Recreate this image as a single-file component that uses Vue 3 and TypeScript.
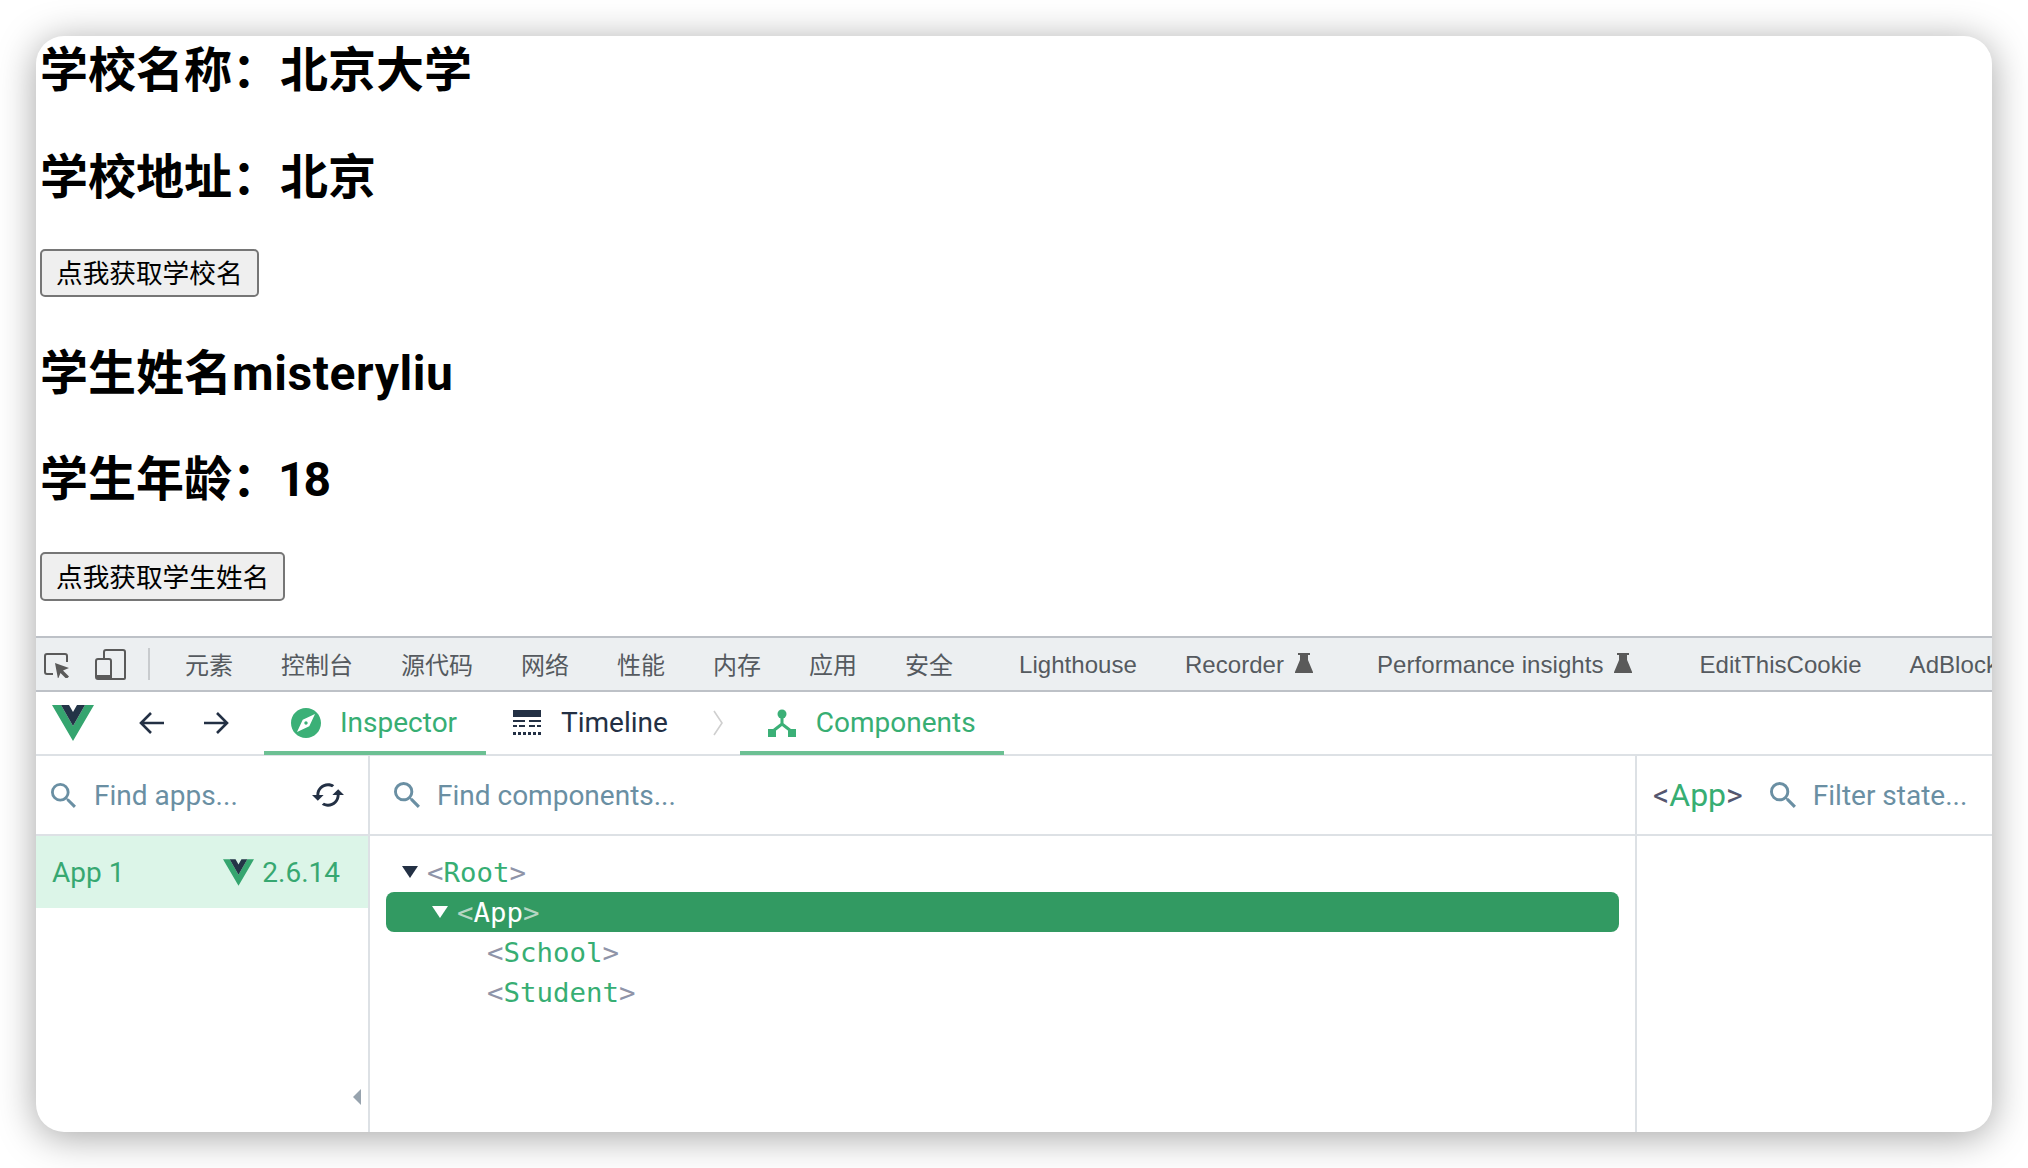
<script setup lang="ts">
const cnTabs: string[] = ['元素', '控制台', '源代码', '网络', '性能', '内存', '应用', '安全']
const searchPath = 'M15.5 14h-.79l-.28-.27A6.47 6.47 0 0 0 16 9.5 6.5 6.5 0 1 0 9.5 16c1.61 0 3.09-.59 4.23-1.57l.27.28v.79l5 4.99L20.49 19l-4.99-5zm-6 0C7.01 14 5 11.99 5 9.5S7.01 5 9.5 5 14 7.01 14 9.5 11.99 14 9.5 14z'
</script>

<template>
  <div class="window">
    <div class="page">
      <h2 class="first">学校名称：北京大学</h2>
      <h2>学校地址：北京</h2>
      <button class="btn">点我获取学校名</button>
      <h2 class="third">学生姓名<span class="wide">misteryliu</span></h2>
      <h2 class="fourth">学生年龄：<span class="narrow">18</span></h2>
      <button class="btn last">点我获取学生姓名</button>
    </div>

    <div class="devtools">
      <div class="chrome-bar">
        <svg class="ic-inspect" viewBox="0 0 28 28" width="28" height="28">
          <path d="M10 24H4a2 2 0 0 1-2-2V6a2 2 0 0 1 2-2h18a2 2 0 0 1 2 2v6" fill="none" stroke="#5a5a5a" stroke-width="2" />
          <path d="M12 13l14 5-6 2.5 6 6-2.5 2.500-6-6L15 29z" fill="#5a5a5a" />
        </svg>
        <svg class="ic-device" viewBox="0 0 32 32" width="32" height="32">
          <path d="M9 11V4a2 2 0 0 1 2-2h17a2 2 0 0 1 2 2v26a1 1 0 0 1-1 1H3a2 2 0 0 1-2-2V13a2 2 0 0 1 2-2h11a2 2 0 0 1 2 2v18" fill="none" stroke="#5a5a5a" stroke-width="2" />
          <rect x="2" y="27" width="14" height="4" fill="#5a5a5a" />
        </svg>
        <span class="vsep"></span>
        <span v-for="t in cnTabs" :key="t" class="ctab">{{ t }}</span>
        <span class="ctab lat first-lat">Lighthouse</span>
        <span class="ctab lat">Recorder<svg class="flask" viewBox="0 0 18 20" width="18" height="20"><path d="M3 0h12v2h-2v5l5 12v1H0v-1L5 7V2H3z" fill="#5a5a5a" /></svg></span>
        <span class="ctab lat">Performance insights<svg class="flask flask-wide" viewBox="0 0 18 20" width="18" height="20"><path d="M3 0h12v2h-2v5l5 12v1H0v-1L5 7V2H3z" fill="#5a5a5a" /></svg></span>
        <span class="ctab lat">EditThisCookie</span>
        <span class="ctab lat">AdBlock</span>
      </div>

      <div class="vue-bar">
        <svg class="logo" viewBox="0 0 42 36" width="42" height="36">
          <path d="M0 0h9l12 21L33 0h9L21 36z" fill="#35a56f" />
          <path d="M9 0h8l4 7 4-7h8L21 21z" fill="#233447" />
        </svg>
        <svg class="arrow" viewBox="0 0 26 24" width="26" height="24">
          <path d="M25 12H3M12 2L2 12l10 10" fill="none" stroke="#233044" stroke-width="2.600" />
        </svg>
        <svg class="arrow second" viewBox="0 0 26 24" width="26" height="24">
          <path d="M1 12h22M14 2l10 10-10 10" fill="none" stroke="#233044" stroke-width="2.600" />
        </svg>
        <div class="vtab active inspector">
          <svg viewBox="2 2 20 20" width="30" height="30">
            <path d="M12 10.900c-.61 0-1.100.49-1.100 1.100s.49 1.100 1.100 1.100c.61 0 1.100-.49 1.100-1.100s-.49-1.100-1.100-1.100zM12 2C6.480 2 2 6.480 2 12s4.480 10 10 10 10-4.480 10-10S17.520 2 12 2zm2.190 12.190L6 18l3.810-8.190L18 6l-3.810 8.190z" fill="#3bb077" />
          </svg>
          <span>Inspector</span>
        </div>
        <div class="vtab timeline">
          <svg viewBox="0 0 28 26" width="28" height="26">
            <path d="M0 0h28v7H0zM0 10h12v2H0zM16 10h12v2H16zM0 15h4v2H0zM6 15h6v2H6zM16 15h6v2h-6zM24 15h4v2h-4zM0 22h3v3H0zM5 22h3v3H5zM10 22h3v3h-3zM15 22h3v3h-3zM20 22h3v3h-3zM25 22h3v3h-3z" fill="#233044" />
          </svg>
          <span>Timeline</span>
        </div>
        <svg class="chev" viewBox="0 0 10 26" width="10" height="26">
          <path d="M1 1l8 12-8 12" fill="none" stroke="#cfcfcf" stroke-width="1.600" />
        </svg>
        <div class="vtab active components">
          <svg viewBox="0 0 28 28" width="28" height="28">
            <circle cx="14" cy="5" r="4.500" fill="#3bb077" />
            <path d="M14 8v8M14 15l-9 7M14 15l9 7" fill="none" stroke="#3bb077" stroke-width="3" />
            <rect x="0" y="20" width="8" height="8" fill="#3bb077" />
            <rect x="20" y="20" width="8" height="8" fill="#3bb077" />
          </svg>
          <span>Components</span>
        </div>
      </div>

      <div class="panes">
        <div class="pane-apps">
          <div class="search">
            <svg class="sicon" viewBox="3 3 17.500 17.500" width="25" height="25"><path :d="searchPath" fill="#6a8fa3" /></svg>
            <span class="ph">Find apps...</span>
            <svg class="reload" viewBox="1 4 22 16" width="32" height="24">
              <path d="M19 8l-4 4h3c0 3.310-2.690 6-6 6-1.010 0-1.970-.25-2.800-.7l-1.460 1.460C8.970 19.540 10.430 20 12 20c4.420 0 8-3.580 8-8h3l-4-4zM6 12c0-3.310 2.690-6 6-6 1.010 0 1.970.25 2.800.7l1.460-1.460C15.030 4.460 13.570 4 12 4c-4.420 0-8 3.580-8 8H1l4 4 4-4H6z" fill="#233044" />
            </svg>
          </div>
          <div class="app-row">
            <span>App 1</span>
            <span class="ver">
              <svg viewBox="0 0 42 36" width="31" height="27">
                <path d="M0 0h9l12 21L33 0h9L21 36z" fill="#35a56f" />
                <path d="M9 0h8l4 7 4-7h8L21 21z" fill="#233447" />
              </svg>
              2.6.14
            </span>
          </div>
          <div class="collapse-wrap"><i class="collapse"></i></div>
        </div>

        <div class="pane-tree">
          <div class="search">
            <svg class="sicon" viewBox="3 3 17.500 17.500" width="26" height="26"><path :d="searchPath" fill="#6a8fa3" /></svg>
            <span class="ph">Find components...</span>
          </div>
          <div class="tree">
            <div class="row lvl0"><i class="tri"></i><span class="ang">&lt;</span>Root<span class="ang">&gt;</span></div>
            <div class="row lvl1 sel"><i class="tri"></i><span class="ang">&lt;</span>App<span class="ang">&gt;</span></div>
            <div class="row lvl2"><span class="ang">&lt;</span>School<span class="ang">&gt;</span></div>
            <div class="row lvl2"><span class="ang">&lt;</span>Student<span class="ang">&gt;</span></div>
          </div>
        </div>

        <div class="pane-state">
          <div class="search state-search">
            <span class="comp"><span class="dim">&lt;</span>App<span class="dim">&gt;</span></span>
            <svg class="sicon" viewBox="3 3 17.500 17.500" width="26" height="26"><path :d="searchPath" fill="#6a8fa3" /></svg>
            <span class="ph">Filter state...</span>
          </div>
        </div>
      </div>
    </div>
  </div>
</template>

<style>
html, body { margin: 0; height: 1168px; overflow: hidden; background: #fff; }
</style>

<style scoped>
.window {
  box-sizing: border-box;
  width: 1956px;
  height: 1096px;
  margin: 36px;
  border-radius: 28px;
  overflow: hidden;
  background: #fff;
  box-shadow: 0 5px 38px rgba(0, 0, 0, 0.36);
  display: flex;
  flex-direction: column;
  font-family: Roboto, "Noto Sans CJK SC", sans-serif;
}
.page {
  height: 600px;
  flex: none;
  padding-left: 4px;
  display: flex;
  flex-direction: column;
  align-items: flex-start;
}
h2 {
  margin: 40px 0 -3px;
  font-family: Roboto, "Noto Sans CJK SC", sans-serif;
  font-size: 48px;
  line-height: 70px;
  font-weight: 700;
  color: #000;
}
h2.first { margin-top: 0; }
h2.third { margin-top: 42px; }
h2.fourth { margin-top: 39px; }
.wide { letter-spacing: 0.6px; }
.narrow { letter-spacing: -2px; margin-left: -2px; }
.btn {
  box-sizing: border-box;
  height: 48px;
  margin-top: 39px;
  padding: 0 14px 2px;
  border: 2px solid #767676;
  border-radius: 5px;
  background: #efefef;
  color: #000;
  font-family: "Noto Sans CJK SC", sans-serif;
  font-size: 26.67px;
  line-height: 42px;
}
.btn.last { height: 49px; margin-top: 40px; }
.devtools { flex: 1; display: flex; flex-direction: column; min-height: 0; }
.chrome-bar {
  box-sizing: border-box;
  height: 56px;
  flex: none;
  display: flex;
  align-items: center;
  background: #eceff1;
  border-top: 2px solid #bdc1c7;
  border-bottom: 2px solid #bdc1c7;
  white-space: nowrap;
  overflow: hidden;
  color: #555a5f;
}
.ic-inspect { margin-left: 7px; flex: none; }
.ic-device { margin-left: 24px; flex: none; }
.vsep { width: 2px; height: 32px; background: #c8cbce; margin: 0 11px 0 21px; flex: none; }
.ctab {
  flex: none;
  font-family: "Noto Sans CJK SC", sans-serif;
  font-size: 24px;
  padding: 0 24px 2px;
  display: flex;
  align-items: center;
}
.lat {
  font-family: "Liberation Sans", sans-serif;
  letter-spacing: 0.05px;
  padding: 2px 24px 0;
}
.first-lat { margin-left: 18px; }
.flask { margin: -4px 16px 0 11px; }
.flask-wide { margin-right: 19px; }
.vue-bar {
  box-sizing: border-box;
  height: 64px;
  flex: none;
  display: flex;
  align-items: center;
  border-bottom: 2px solid #dde1e5;
}
.logo { margin: 0 0 0 16px; flex: none; }
.arrow { margin: 0 0 0 45px; flex: none; }
.arrow.second { margin-left: 38px; }
.vtab {
  box-sizing: border-box;
  height: 62px;
  padding-top: 2px;
  display: flex;
  align-items: center;
  font-size: 28px;
  color: #233044;
  flex: none;
  border-bottom: 4px solid transparent;
  margin-bottom: -1px;
}
.vtab.active { color: #37ae73; border-bottom-color: #6cc093; }
.inspector { width: 222px; margin-left: 35px; padding-left: 27px; gap: 19px; }
.timeline { margin-left: 27px; gap: 20px; }
.chev { margin-left: 45px; flex: none; }
.components { width: 264px; margin-left: 17px; padding-left: 28px; gap: 20px; }
.panes { flex: 1; display: flex; min-height: 0; }
.search {
  box-sizing: border-box;
  height: 80px;
  flex: none;
  display: flex;
  align-items: center;
  border-bottom: 2px solid #dde1e5;
  font-size: 28px;
}
.ph { color: #6a8fa3; }
.sicon { flex: none; }
.pane-apps {
  width: 332px;
  flex: none;
  display: flex;
  flex-direction: column;
  border-right: 2px solid #dde1e5;
}
.pane-apps .search { padding-left: 15px; gap: 18px; }
.reload { margin-left: auto; margin-right: 24px; }
.app-row {
  box-sizing: border-box;
  height: 72px;
  flex: none;
  padding: 0 28px 0 16px;
  display: flex;
  align-items: center;
  justify-content: space-between;
  background: #dcf5e8;
  color: #37a871;
  font-size: 28px;
}
.ver { display: flex; align-items: center; gap: 8px; }
.collapse-wrap {
  flex: 1;
  display: flex;
  align-items: flex-end;
  justify-content: flex-end;
  padding: 0 7px 27px 0;
}
.collapse {
  width: 0;
  height: 0;
  border-style: solid;
  border-width: 8px 8px 8px 0;
  border-color: transparent #97a3ae transparent transparent;
}
.pane-tree {
  flex: 1;
  min-width: 0;
  display: flex;
  flex-direction: column;
  border-right: 2px solid #dde1e5;
}
.pane-tree .search { padding-left: 24px; gap: 17px; }
.tree { padding: 16px 16px 0; }
.row {
  height: 40px;
  display: flex;
  align-items: center;
  font-family: "DejaVu Sans Mono", monospace;
  font-size: 27.400px;
  color: #37ae73;
  border-radius: 8px;
  white-space: pre;
}
.ang { color: #8f94a8; }
.tri {
  width: 0;
  height: 0;
  border-style: solid;
  border-width: 12px 8px 0;
  border-color: #233044 transparent transparent;
  margin-right: 9px;
  flex: none;
}
.lvl0 { padding-left: 16px; }
.lvl1 { padding-left: 46px; }
.lvl2 { padding-left: 101px; }
.sel { background: #329a62; color: #fff; }
.sel .tri { border-top-color: #fff; }
.sel .ang { color: #b5d6c3; }
.pane-state { width: 355px; flex: none; }
.state-search { padding-left: 16px; }
.comp { font-size: 32px; color: #37ae73; margin-right: 27px; }
.dim { color: #54566e; }
.state-search .ph { margin-left: 17px; }
</style>
